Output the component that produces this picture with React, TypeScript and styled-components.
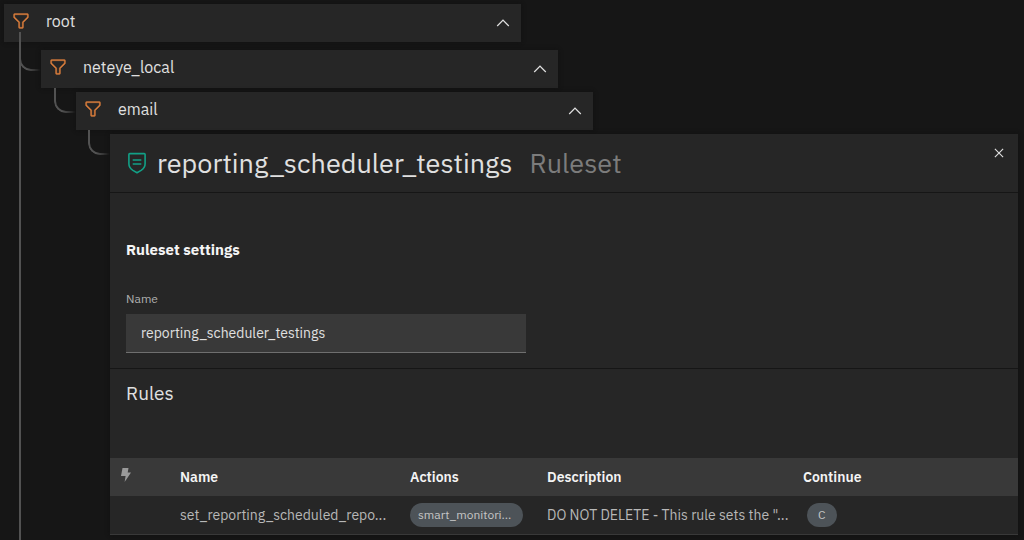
import React, { useState } from "react";
import styled, { createGlobalStyle } from "styled-components";

const GlobalStyle = createGlobalStyle`
  *, *::before, *::after { box-sizing: border-box; }
  body {
    margin: 0;
    background: #161616;
    color: #e0e0e0;
    font-family: "IBM Plex Sans", Roboto, "Liberation Sans", sans-serif;
    font-size: 14px;
    line-height: 20px;
  }
`;

const Page = styled.main`
  position: relative;
  min-height: 100vh;
  padding: 4px 6px 4px 4px;
`;

const Trunk = styled.div`
  position: absolute;
  z-index: 1;
  top: 32px;
  bottom: 0;
  left: 19px;
  width: 2px;
  background: #525252;
`;

const Branch = styled.div<{ $indent: number; $gap: number }>`
  position: relative;
  margin-left: ${(p) => p.$indent}px;
  padding-top: ${(p) => p.$gap}px;

  &::before {
    content: "";
    position: absolute;
    top: 0;
    left: -22px;
    width: 22px;
    height: ${(p) => p.$gap + 21}px;
    border: solid #525252;
    border-width: 0 0 2px 2px;
    border-bottom-left-radius: 12px;
    mask-image: linear-gradient(to right, #000 40%, transparent);
  }
`;

const NodeBar = styled.div`
  position: relative;
  display: flex;
  align-items: center;
  gap: 15px;
  width: 517px;
  max-width: 100%;
  height: 38px;
  padding: 0 8px 0 7px;
  background: #262626;
  box-shadow: 0 0 4px #111111;
`;

const NodeLabel = styled.span`
  flex: 1;
  display: flex;
  align-items: center;
  gap: 15px;
  padding-bottom: 4px;
  font-size: 16px;
`;

const IconButton = styled.button`
  display: flex;
  padding: 0;
  border: 0;
  background: none;
  color: #e0e0e0;
  cursor: pointer;
`;

const Panel = styled.section`
  position: relative;
  background: #262626;
  box-shadow: 0 0 4px #111111;
`;

const PanelHeader = styled.header`
  display: flex;
  align-items: flex-start;
  gap: 8px;
  height: 59px;
  padding: 10px 10px 0 16px;
  border-bottom: 1px solid #161616;
`;

const Title = styled.h1`
  flex: 1;
  display: flex;
  align-items: center;
  gap: 9px;
  margin: 0;
  font-size: 27px;
  line-height: 37px;
  font-weight: 400;
`;

const Kind = styled.span`
  margin-left: 8px;
  color: #7c7c7c;
`;

const Settings = styled.section`
  padding: 47px 16px 15px;
  border-bottom: 1px solid #161616;
`;

const SettingsTitle = styled.h2`
  margin: 0 0 29px;
  font-size: 15px;
  line-height: 20px;
  font-weight: 700;
  color: #f4f4f4;
`;

const Label = styled.label`
  display: block;
  margin-bottom: 5px;
  font-size: 12px;
  color: #b0b0b0;
`;

const TextInput = styled.input`
  display: block;
  width: 400px;
  max-width: 100%;
  height: 39px;
  padding: 0 15px;
  border: 0;
  border-bottom: 1px solid #6f6f6f;
  border-radius: 0;
  outline: 0;
  background: #393939;
  color: #e0e0e0;
  font: inherit;
`;

const RulesTitle = styled.h2`
  margin: 0;
  padding: 10px 16px 51px;
  font-size: 19px;
  line-height: 28px;
  font-weight: 400;
`;

const Table = styled.table`
  width: 100%;
  table-layout: fixed;
  border-collapse: collapse;

  th, td {
    height: 38px;
    padding: 0 0 0 15px;
    text-align: left;
    white-space: nowrap;
  }
  th { background: #393939; color: #f4f4f4; font-weight: 600; }
  th:first-child { padding: 0 10px; }
  td { color: #b8b8b8; border-bottom: 1px solid #393939; }
`;

const Col = styled.col<{ $width?: number }>`
  width: ${(p) => (p.$width ? `${p.$width}px` : "auto")};
`;

const Tag = styled.span<{ $inset?: boolean }>`
  display: inline-block;
  margin-left: ${(p) => (p.$inset ? 4 : 0)}px;
  padding: 0 12px 0 ${(p) => (p.$inset ? 11 : 8)}px;
  border-radius: 12px;
  background: #4d5358;
  color: #c6c6c6;
  font-size: 12px;
  line-height: 24px;
  vertical-align: middle;
`;

const FilterIcon = () => (
  <svg width="20" height="20" viewBox="0 0 32 32" fill="#dd7f3c" aria-hidden="true">
    <path d="M18 28h-4a2 2 0 0 1-2-2v-7.59L4.59 11A2 2 0 0 1 4 9.59V6a2 2 0 0 1 2-2h20a2 2 0 0 1 2 2v3.59A2 2 0 0 1 27.41 11L20 18.41V26a2 2 0 0 1-2 2ZM6 6v3.59l8 8V26h4v-8.41l8-8V6Z" stroke="#dd7f3c" strokeWidth="0.5" />
  </svg>
);

const ChevronUpIcon = () => (
  <svg width="20" height="20" viewBox="0 0 32 32" fill="currentColor" aria-hidden="true">
    <path d="M16 10 26 20l-1.4 1.4-8.6-8.6-8.6 8.6L6 20z" />
  </svg>
);

const CloseIcon = () => (
  <svg width="18" height="18" viewBox="0 0 32 32" fill="currentColor" aria-hidden="true">
    <path d="M24 9.4 22.6 8 16 14.6 9.4 8 8 9.4l6.6 6.6L8 22.6 9.4 24l6.6-6.6 6.6 6.6 1.4-1.4-6.6-6.6L24 9.4z" />
  </svg>
);

const RulesetIcon = () => (
  <svg width="22" height="22" viewBox="0 0 22 22" fill="none" stroke="#12a086" strokeWidth="1.6" strokeLinejoin="round" aria-hidden="true">
    <path d="M3.8 1.6h14.4a.9.9 0 0 1 .9.9v9.3c0 3-1.4 5-4 6.6L11 20.7l-4.1-2.3c-2.6-1.6-4-3.6-4-6.6V2.5a.9.9 0 0 1 .9-.9Z" />
    <path d="M6.7 8h8.6M6.7 12h8.6" />
  </svg>
);

const BoltIcon = () => (
  <svg width="12" height="14" viewBox="0 0 12 14" fill="#9a9a9a" role="img" aria-label="Enabled">
    <path d="M2.5 0h6L7.7 4.5H11L4.6 14l1-6H1z" />
  </svg>
);

function TreeNode({ name }: { name: string }) {
  return (
    <NodeBar>
      <NodeLabel>
        <FilterIcon />
        {name}
      </NodeLabel>
      <IconButton type="button" aria-label={`Collapse ${name}`}>
        <ChevronUpIcon />
      </IconButton>
    </NodeBar>
  );
}

function RulesetPanel() {
  const [name, setName] = useState("reporting_scheduler_testings");
  return (
    <Panel>
      <PanelHeader>
        <Title>
          <RulesetIcon />
          reporting_scheduler_testings
          <Kind>Ruleset</Kind>
        </Title>
        <IconButton type="button" aria-label="Close">
          <CloseIcon />
        </IconButton>
      </PanelHeader>
      <Settings>
        <SettingsTitle>Ruleset settings</SettingsTitle>
        <Label htmlFor="ruleset-name">Name</Label>
        <TextInput id="ruleset-name" value={name} onChange={(e) => setName(e.target.value)} />
      </Settings>
      <RulesTitle>Rules</RulesTitle>
      <Table>
        <colgroup>
          <Col $width={55} />
          <Col $width={230} />
          <Col $width={137} />
          <Col $width={256} />
          <Col />
        </colgroup>
        <thead>
          <tr>
            <th scope="col"><BoltIcon /></th>
            <th scope="col">Name</th>
            <th scope="col">Actions</th>
            <th scope="col">Description</th>
            <th scope="col">Continue</th>
          </tr>
        </thead>
        <tbody>
          <tr>
            <td />
            <td>set_reporting_scheduled_repo...</td>
            <td><Tag>smart_monitori...</Tag></td>
            <td>DO NOT DELETE - This rule sets the "...</td>
            <td><Tag $inset>C</Tag></td>
          </tr>
        </tbody>
      </Table>
    </Panel>
  );
}

export default function App() {
  return (
    <>
      <GlobalStyle />
      <Page>
        <TreeNode name="root" />
        <Trunk />
        <Branch $indent={37} $gap={8}>
          <TreeNode name="neteye_local" />
          <Branch $indent={35} $gap={4}>
            <TreeNode name="email" />
            <Branch $indent={34} $gap={4}>
              <RulesetPanel />
            </Branch>
          </Branch>
        </Branch>
      </Page>
    </>
  );
}
